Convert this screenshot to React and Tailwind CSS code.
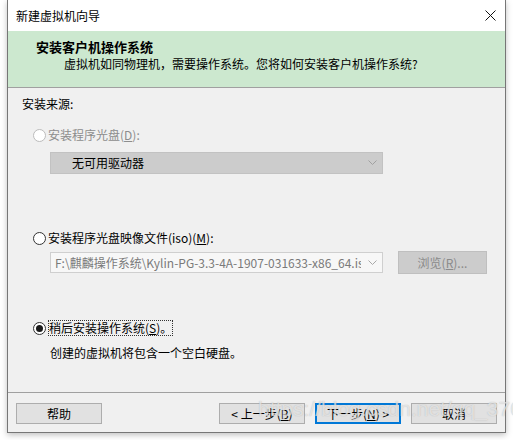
import React from "react";

const cjk = { fontFamily: '"Noto Sans CJK SC", "Noto Sans", sans-serif' };

function Radio({ state }) {
  const border =
    state === "disabled" ? "border-[#bcbcbc]" : "border-[#333333]";
  return (
    <span
      className={`flex h-[13px] w-[13px] shrink-0 items-center justify-center rounded-full border ${border} bg-white`}
    >
      {state === "on" && (
        <span className="h-[7px] w-[7px] rounded-full bg-[#1a1a1a]" />
      )}
    </span>
  );
}

function Chevron({ color = "#a8a8a8" }) {
  return (
    <svg width="9" height="6" viewBox="0 0 9 6" className="shrink-0">
      <path d="M0.5 0.5 L4.5 4.5 L8.5 0.5" fill="none" stroke={color} strokeWidth="1" />
    </svg>
  );
}

function Btn({ children, primary }) {
  return (
    <div
      className={`flex h-[21px] w-[86px] items-center justify-center bg-[#e1e1e1] text-[12px] leading-none text-black ${
        primary ? "border-2 border-[#0078d7]" : "border border-[#adadad]"
      }`}
    >
      {children}
    </div>
  );
}

export default function App() {
  return (
    <div className="relative h-[440px] w-[513px] overflow-hidden bg-white" style={cjk}>
      <div className="ml-[7px] flex h-[433px] w-[499px] flex-col border-x border-b border-[#767676] shadow-[0_2px_6px_rgba(0,0,0,0.25)]">
        {/* title bar */}
        <div className="flex h-[31px] shrink-0 items-center justify-between bg-white pl-[8px] pr-[9px]">
          <span className="text-[12px] leading-none text-black">新建虚拟机向导</span>
          <svg width="11" height="11" viewBox="0 0 11 11">
            <path d="M0.5 0.5 L10.5 10.5 M10.5 0.5 L0.5 10.5" stroke="#111" strokeWidth="1" />
          </svg>
        </div>
        {/* header */}
        <div className="flex h-[57px] shrink-0 flex-col border-b border-[#a0a0a0] bg-[#cce8cf] pl-[28px] pt-[8px]">
          <div className="text-[13px] font-bold leading-[16px] text-black">安装客户机操作系统</div>
          <div className="pl-[28px] pt-[1px] text-[12px] leading-[16px] text-black">
            虚拟机如同物理机，需要操作系统。您将如何安装客户机操作系统?
          </div>
        </div>
        {/* body */}
        <div className="flex flex-1 flex-col bg-[#f0f0f0]">
          <div className="flex flex-1 flex-col pl-[14px]">
            <div className="mt-[8px] text-[12px] leading-[16px] text-black">安装来源:</div>

            <div className="ml-[11px] mt-[15px] flex h-[16px] items-center gap-[2px]">
              <Radio state="disabled" />
              <span className="text-[12px] leading-[16px] text-[#8d8d8d]">
                安装程序光盘(<span className="underline">D</span>):
              </span>
            </div>
            <div className="ml-[28px] mt-[9px] flex h-[22px] w-[333px] items-center justify-between border border-[#c2c2c2] bg-[#cccccc] pl-[21px] pr-[5px]">
              <span className="text-[12px] leading-none text-black">无可用驱动器</span>
              <Chevron color="#a0a0a0" />
            </div>

            <div className="ml-[11px] mt-[56px] flex h-[16px] items-center gap-[2px]">
              <Radio state="off" />
              <span className="text-[12px] leading-[16px] text-black">
                安装程序光盘映像文件(iso)(<span className="underline">M</span>):
              </span>
            </div>
            <div className="ml-[28px] mt-[6px] flex h-[21px] items-center gap-[15px]">
              <div className="flex h-[21px] w-[333px] items-center justify-between border border-[#cfcfcf] bg-[#f7f7f7] pl-[4px] pr-[5px]">
                <span className="h-[17px] w-[306px] overflow-hidden whitespace-nowrap text-[12px] leading-[17px] text-[#7a7a7a]">
                  F:\麒麟操作系统\Kylin-PG-3.3-4A-1907-031633-x86_64.iso
                </span>
                <Chevron color="#a8a8a8" />
              </div>
              <div className="flex h-[23px] w-[89px] items-center justify-center border border-[#bfbfbf] bg-[#cccccc] text-[12px] leading-none text-[#8a8a8a]">
                浏览(<span className="underline">R</span>)...
              </div>
            </div>

            <div className="ml-[11px] mt-[47px] flex h-[16px] items-center gap-[2px]">
              <Radio state="on" />
              <span className="border border-dotted border-[#333] text-[12px] leading-[14px] text-black">
                稍后安装操作系统(<span className="underline">S</span>)。
              </span>
            </div>
            <div className="ml-[28px] mt-[9px] text-[12px] leading-[16px] text-black">
              创建的虚拟机将包含一个空白硬盘。
            </div>
          </div>
          {/* footer */}
          <div className="flex h-[40px] shrink-0 items-start border-t border-[#a0a0a0] px-[8px] pt-[10px]">
            <Btn>帮助</Btn>
            <div className="ml-auto flex gap-[10px]">
              <Btn>&lt; 上一步(<span className="underline">B</span>)</Btn>
              <Btn primary>
                下一步(<span className="underline">N</span>) &gt;
              </Btn>
              <Btn>取消</Btn>
            </div>
          </div>
        </div>
      </div>
      {/* watermark */}
      <div
        className="pointer-events-none absolute left-[258px] top-[398px] whitespace-nowrap text-[21px] leading-none text-white/60 [text-shadow:0_0_1px_rgba(120,120,120,0.5)]"
        style={{ fontFamily: '"Liberation Sans", Arial, sans-serif' }}
      >
        https://blog.csdn.net/qq_37012755
      </div>
    </div>
  );
}
